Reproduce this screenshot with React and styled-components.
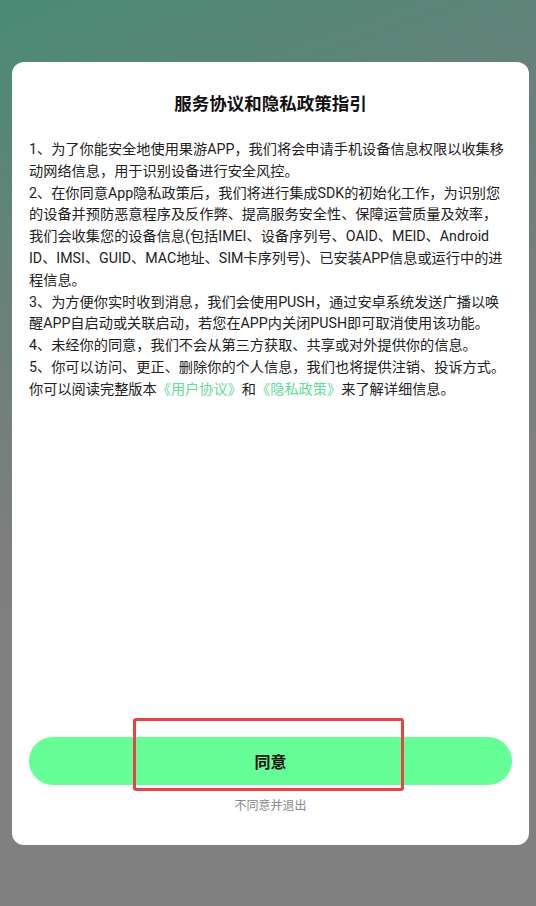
import React from "react";
import styled, { createGlobalStyle } from "styled-components";

const GlobalStyle = createGlobalStyle`
  html, body {
    margin: 0;
    padding: 0;
  }
  body {
    font-family: Roboto, "Noto Sans CJK SC", sans-serif;
    -webkit-font-smoothing: antialiased;
  }
`;

const Screen = styled.div`
  width: 536px;
  height: 906px;
  box-sizing: border-box;
  padding: 62px 7px 61px 12px;
  background: linear-gradient(160deg, #4a8b76 0%, #6a807a 28%, #7c7f7e 48%, #808080 62%);
  display: flex;
  overflow: hidden;
`;

const Dialog = styled.div`
  flex: 1;
  background: #fff;
  border-radius: 12px;
  padding: 30px 17px 0;
  display: flex;
  flex-direction: column;
`;

const Title = styled.h2`
  margin: 0;
  font-size: 17.5px;
  line-height: 24px;
  font-weight: 700;
  color: #111;
  text-align: center;
`;

const Body = styled.div`
  flex: 1;
  margin: 23px 5px 0 0;
  font-size: 14.2px;
  line-height: 21.8px;
  color: #222;
`;

const Para = styled.p`
  margin: 0;
`;

const Link = styled.span`
  color: #62dc96;
`;

const Footer = styled.div`
  position: relative;
  display: flex;
  flex-direction: column;
  align-items: center;
  padding-bottom: 31px;
`;

const AgreeButton = styled.button`
  width: 100%;
  height: 48px;
  border: none;
  border-radius: 24px;
  background: #66fe96;
  color: #111;
  font-family: inherit;
  font-size: 16px;
  font-weight: 700;
  cursor: pointer;
`;

const Refuse = styled.div`
  margin-top: 13px;
  font-size: 12px;
  line-height: 16px;
  color: #8a8a8a;
`;

const Highlight = styled.div`
  position: absolute;
  left: ${({ $left }) => $left}px;
  top: ${({ $top }) => $top}px;
  width: ${({ $width }) => $width}px;
  height: ${({ $height }) => $height}px;
  box-sizing: border-box;
  border: 3px solid #e84343;
  border-radius: 3px;
  pointer-events: none;
`;

const items = [
  "1、为了你能安全地使用果游APP，我们将会申请手机设备信息权限以收集移动网络信息，用于识别设备进行安全风控。",
  "2、在你同意App隐私政策后，我们将进行集成SDK的初始化工作，为识别您的设备并预防恶意程序及反作弊、提高服务安全性、保障运营质量及效率，我们会收集您的设备信息(包括IMEI、设备序列号、OAID、MEID、Android ID、IMSI、GUID、MAC地址、SIM卡序列号)、已安装APP信息或运行中的进程信息。",
  "3、为方便你实时收到消息，我们会使用PUSH，通过安卓系统发送广播以唤醒APP自启动或关联启动，若您在APP内关闭PUSH即可取消使用该功能。",
  "4、未经你的同意，我们不会从第三方获取、共享或对外提供你的信息。",
  "5、你可以访问、更正、删除你的个人信息，我们也将提供注销、投诉方式。",
];

export default function App() {
  return (
    <>
      <GlobalStyle />
      <Screen>
        <Dialog>
          <Title>服务协议和隐私政策指引</Title>
          <Body>
            {items.map((text) => (
              <Para key={text}>{text}</Para>
            ))}
            <Para>
              你可以阅读完整版本<Link>《用户协议》</Link>和<Link>《隐私政策》</Link>来了解详细信息。
            </Para>
          </Body>
          <Footer>
            <AgreeButton>同意</AgreeButton>
            <Refuse>不同意并退出</Refuse>
            <Highlight $left={104} $top={-19} $width={271} $height={73} />
          </Footer>
        </Dialog>
      </Screen>
    </>
  );
}
